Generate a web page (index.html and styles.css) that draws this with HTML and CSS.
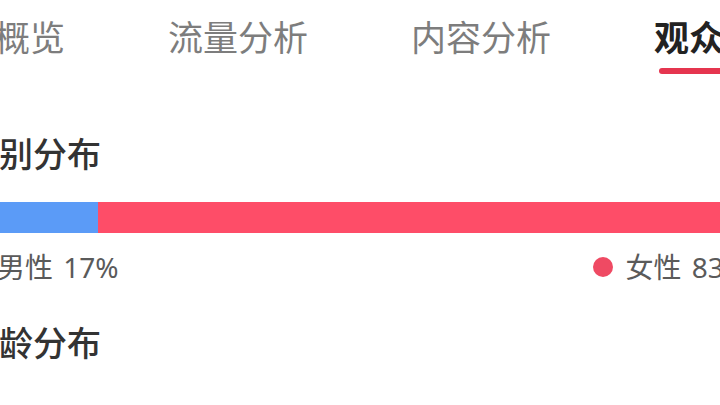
FILE: index.html
```html
<html>
<head>
<meta charset="utf-8">
<link rel="stylesheet" href="styles.css">
</head>
<body>

<div class="page">
  <div class="tabs">
    <div class="tab">概览</div>
    <div class="tab">流量分析</div>
    <div class="tab">内容分析</div>
    <div class="tab active">观众分析</div>
  </div>

  <div class="section">
    <h2 class="title">性别分布</h2>
    <div class="bar">
      <div class="bar-male" style="width:17%"></div>
      <div class="bar-female"></div>
    </div>
    <div class="legend">
      <span class="legend-item"><i class="dot dot-male"></i>男性 17%</span>
      <span class="legend-item"><i class="dot dot-female"></i>女性 83%</span>
    </div>
  </div>

  <div class="section">
    <h2 class="title title-age">年龄分布</h2>
  </div>
</div>

</body>
</html>
```

FILE: styles.css
```css
body {
	margin: 0;
	background: #fff;
	overflow: hidden;
	font-family: "Noto Sans CJK SC", "Noto Sans", sans-serif;
}

.page {
	width: 782px;
	margin-left: -35px;
}

/* top tab bar */
.tabs {
	display: flex;
	gap: 103px;
	padding-left: 30px;
	white-space: nowrap;
}

.tab {
	position: relative;
	font-size: 35px;
	line-height: 48px;
	padding: 12px 0 14px;
	color: #7d7d7d;
}

.tab.active {
	color: #222;
	font-weight: bold;
}

.tab.active::after {
	content: "";
	position: absolute;
	left: 5px;
	right: 5px;
	bottom: 0;
	height: 6px;
	border-radius: 3px;
	background: #e5354f;
}

/* sections */
.title {
	margin: 55px 0 0;
	font-size: 34px;
	line-height: 48px;
	font-weight: 500;
	color: #333;
	white-space: nowrap;
}

.title-age {
	margin-top: 33px;
}

.bar {
	display: flex;
	height: 31px;
	margin-top: 25px;
}

.bar-male {
	background: #5b9bf7;
}

.bar-female {
	flex: 1;
	background: #fe4d68;
}

.legend {
	display: flex;
	justify-content: space-between;
	margin-top: 16px;
	font-family: "Noto Sans", "Noto Sans CJK SC", sans-serif;
	font-size: 28px;
	line-height: 36px;
	color: #5a5a5a;
	word-spacing: 3px;
	white-space: nowrap;
}

.legend-item {
	display: flex;
	align-items: center;
}

.dot {
	width: 20px;
	height: 20px;
	border-radius: 50%;
	margin-right: 12px;
}

.dot-male {
	background: #5b9bf7;
}

.dot-female {
	background: #ef4a63;
}
```
